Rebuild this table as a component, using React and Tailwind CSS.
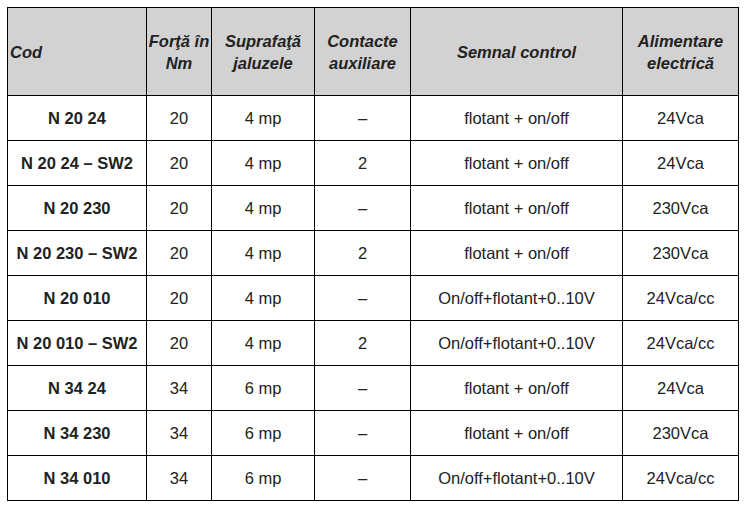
const rows = [
  ['N 20 24', '20', '4 mp', '–', 'flotant + on/off', '24Vca'],
  ['N 20 24 – SW2', '20', '4 mp', '2', 'flotant + on/off', '24Vca'],
  ['N 20 230', '20', '4 mp', '–', 'flotant + on/off', '230Vca'],
  ['N 20 230 – SW2', '20', '4 mp', '2', 'flotant + on/off', '230Vca'],
  ['N 20 010', '20', '4 mp', '–', 'On/off+flotant+0..10V', '24Vca/cc'],
  ['N 20 010 – SW2', '20', '4 mp', '2', 'On/off+flotant+0..10V', '24Vca/cc'],
  ['N 34 24', '34', '6 mp', '–', 'flotant + on/off', '24Vca'],
  ['N 34 230', '34', '6 mp', '–', 'flotant + on/off', '230Vca'],
  ['N 34 010', '34', '6 mp', '–', 'On/off+flotant+0..10V', '24Vca/cc'],
];

export default function App() {
  return (
    <div className="min-h-[509px] w-[748px] bg-white pl-[7px] pt-[7px] font-['Liberation_Sans',Arial,sans-serif] text-[16.5px] text-[#222]">
      <table className="table-fixed border-collapse border border-black">
        <colgroup>
          <col className="w-[139px]" />
          <col className="w-[65px]" />
          <col className="w-[103px]" />
          <col className="w-[96px]" />
          <col className="w-[212px]" />
          <col className="w-[116px]" />
        </colgroup>
        <thead>
          <tr className="h-[88px] bg-[#d2d2d2] font-bold italic leading-[22px]">
            <th className="border border-black px-[2px] text-left">Cod</th>
            <th className="border border-black px-0 text-center">Forţă în<br />Nm</th>
            <th className="border border-black text-center">Suprafaţă<br />jaluzele</th>
            <th className="border border-black text-center">Contacte<br />auxiliare</th>
            <th className="border border-black text-center">Semnal control</th>
            <th className="border border-black text-center">Alimentare<br />electrică</th>
          </tr>
        </thead>
        <tbody>
          {rows.map((r) => (
            <tr key={r[0]} className="h-[45px]">
              <td className="border border-black text-center font-bold">{r[0]}</td>
              {r.slice(1).map((c, i) => (
                <td key={i} className="border border-black text-center">{c}</td>
              ))}
            </tr>
          ))}
        </tbody>
      </table>
    </div>
  );
}
